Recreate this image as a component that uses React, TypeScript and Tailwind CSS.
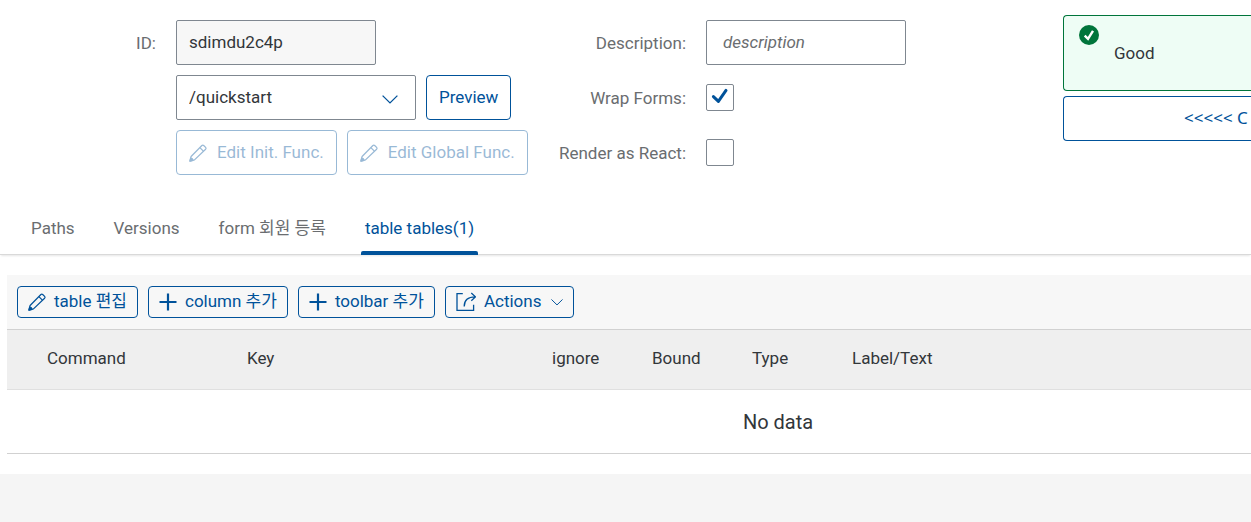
import { useState, type ReactNode } from "react";
import { clsx } from "clsx";

const PencilIcon = () => (
  <svg viewBox="0 0 18 18" className="size-[18px] shrink-0" fill="none" stroke="currentColor" strokeWidth="1.2" strokeLinejoin="round" aria-hidden="true">
    <path d="M0.9 17.1 L2.1 12.5 L12.9 1.5 Q13.8 0.6 14.7 1.5 L16.6 3.4 Q17.4 4.3 16.6 5.2 L5.5 15.9 Z" />
    <path d="M10.9 3.6 L14.4 7.2" />
    <path d="M0.9 17.1 L1.7 14 Q3.8 14.2 4 16.3 Z" fill="currentColor" />
  </svg>
);

const PlusIcon = () => (
  <svg viewBox="0 0 18 18" className="size-[18px] shrink-0" fill="none" stroke="currentColor" strokeWidth="2.2" aria-hidden="true">
    <path d="M0.5 9 H17.5 M9 0.5 V17.5" />
  </svg>
);

const ShareIcon = () => (
  <svg viewBox="0 0 20 20" className="size-5 shrink-0" fill="none" stroke="currentColor" strokeWidth="1.3" aria-hidden="true">
    <path d="M6.8 1.7 H1 V18.3 H17.6 V12.8" />
    <path d="M8.2 14.4 C8.2 8.6 11.4 4.9 19.2 4.9 M15.3 1 L19.4 4.9 L15.3 8.8" />
  </svg>
);

const ChevronIcon = ({ className }: { className: string }) => (
  <svg viewBox="0 0 16 9" className={className} fill="none" stroke="currentColor" strokeWidth="1.3" aria-hidden="true">
    <path d="M0.6 0.6 L8 7.9 L15.4 0.6" />
  </svg>
);

const SuccessIcon = () => (
  <svg viewBox="0 0 20 20" className="size-5 shrink-0" aria-hidden="true">
    <circle cx="10" cy="10" r="10" fill="#00753b" />
    <path d="M5.7 10.6 L9 13.8 L14 5.8" fill="none" stroke="#fff" strokeWidth="2.4" />
  </svg>
);

const fieldLabel = "pt-px text-right leading-6 text-[#6a6d70]";
const buttonBase = "flex items-center rounded border border-[#00529a] text-[#00529a]";

function FormButton({ children, disabled }: { children: ReactNode; disabled?: boolean }) {
  return (
    <button type="button" disabled={disabled} className={clsx(buttonBase, "h-[45px] gap-[10px] bg-white px-3 whitespace-nowrap disabled:opacity-40")}>
      {children}
    </button>
  );
}

function ToolbarButton({ icon, children }: { icon: ReactNode; children: ReactNode }) {
  return (
    <button type="button" className={clsx(buttonBase, "h-8 gap-2 bg-[#f7f7f7] px-[10px] whitespace-nowrap")}>
      {icon}
      {children}
    </button>
  );
}

function CheckField({ id, initial }: { id: string; initial: boolean }) {
  const [checked, setChecked] = useState(initial);
  return (
    <div className="grid justify-self-start">
      <input
        id={id}
        type="checkbox"
        checked={checked}
        onChange={() => setChecked(!checked)}
        className="col-start-1 row-start-1 h-[27px] w-7 appearance-none rounded-xs border border-[#7f8790] bg-white"
      />
      {checked && (
        <svg viewBox="0 0 28 27" className="pointer-events-none col-start-1 row-start-1 h-[27px] w-7" fill="none" stroke="#00529a" strokeWidth="3" strokeLinecap="round" strokeLinejoin="round" aria-hidden="true">
          <path d="M7.4 12.6 L12.4 17.4 L20 6.4" />
        </svg>
      )}
    </div>
  );
}

const tabs = ["Paths", "Versions", "form 회원 등록", "table tables(1)"];

const columns = [
  { title: "Command", width: "w-[200px]" },
  { title: "Key", width: "w-[305px]" },
  { title: "ignore", width: "w-[100px]" },
  { title: "Bound", width: "w-[100px]" },
  { title: "Type", width: "w-[100px]" },
  { title: "Label/Text", width: "" },
];

export default function App() {
  const [active, setActive] = useState(3);
  return (
    <div className="min-h-screen overflow-x-hidden bg-[#f5f5f5] font-['Roboto','Noto_Sans_CJK_KR',sans-serif] text-[17px] text-[#32363a]">
      <main className="bg-white pb-5">
        <div className="flex">
          <form className="grid shrink-0 grid-cols-[156px_356px_134px_337px] items-center gap-x-5 gap-y-[10px] pt-5">
            <label htmlFor="id" className={fieldLabel}>ID:</label>
            <input id="id" readOnly value="sdimdu2c4p" className="h-[45px] w-[200px] rounded-xs border border-[#7f8790] bg-[#f7f7f7] px-3 pb-0.5" />
            <label htmlFor="description" className={fieldLabel}>Description:</label>
            <input id="description" placeholder="description" className="h-[45px] w-[200px] rounded-xs border border-[#7f8790] px-4 pb-0.5 placeholder:text-[#6a6d70] placeholder:italic" />

            <div className="col-start-2 flex gap-[10px]">
              <div className="grid w-[240px] items-center">
                <select aria-label="Path" className="col-start-1 row-start-1 h-[45px] appearance-none rounded-xs border border-[#7f8790] bg-white px-3">
                  <option>/quickstart</option>
                </select>
                <ChevronIcon className="pointer-events-none col-start-1 row-start-1 mt-1 mr-[18px] w-4 justify-self-end text-[#00529a]" />
              </div>
              <FormButton>Preview</FormButton>
            </div>
            <label htmlFor="wrap" className={fieldLabel}>Wrap Forms:</label>
            <CheckField id="wrap" initial />

            <div className="col-start-2 flex gap-[10px]">
              <FormButton disabled><PencilIcon />Edit Init. Func.</FormButton>
              <FormButton disabled><PencilIcon />Edit Global Func.</FormButton>
            </div>
            <label htmlFor="react" className={fieldLabel}>Render as React:</label>
            <CheckField id="react" initial={false} />
          </form>
          <aside className="ml-5 flex min-w-0 flex-1 flex-col gap-[5px] pt-[15px]">
            <div role="status" className="flex h-[76px] gap-[15px] rounded-l border border-r-0 border-[#00753b] bg-[#eefdf5] pl-[15px]">
              <div className="pt-[9px]"><SuccessIcon /></div>
              <p className="self-center leading-6">Good</p>
            </div>
            <button type="button" className="h-[45px] overflow-hidden rounded-l border border-r-0 border-[#00529a] bg-white pb-0.5 pl-[120px] text-left font-['Noto_Sans',sans-serif] whitespace-nowrap text-[#00529a]">
              &lt;&lt;&lt;&lt;&lt; C
            </button>
          </aside>
        </div>

        <div role="tablist" className="mt-[25px] flex h-[55px] gap-[31px] border-b border-[#d9d9d9] px-[27px] shadow-[0_2px_2px_-1px_rgba(0,0,0,0.1)]">
          {tabs.map((tab, i) => (
            <button
              key={tab}
              type="button"
              role="tab"
              aria-selected={i === active}
              onClick={() => setActive(i)}
              className={clsx("-mb-px flex flex-col justify-between px-1 pt-4", i === active ? "text-[#00529a]" : "text-[#6a6d70]")}
            >
              <span className="leading-6">{tab}</span>
              <span className={clsx("-mx-1 h-1 self-stretch rounded-t-xs", i === active && "bg-[#00529a]")} />
            </button>
          ))}
        </div>

        <section className="mt-5 ml-[7px]">
          <div role="toolbar" className="flex h-[55px] items-center gap-[10px] border-b border-[#d1d1d1] bg-[#f7f7f7] px-[10px]">
            <ToolbarButton icon={<PencilIcon />}>table 편집</ToolbarButton>
            <ToolbarButton icon={<PlusIcon />}>column 추가</ToolbarButton>
            <ToolbarButton icon={<PlusIcon />}>toolbar 추가</ToolbarButton>
            <ToolbarButton icon={<ShareIcon />}>
              Actions
              <ChevronIcon className="ml-0.5 w-3" />
            </ToolbarButton>
          </div>
          <table className="w-full min-w-[1542px] table-fixed">
            <thead>
              <tr className="h-[59px] border-b border-[#e0e0e0] bg-[#efefef]">
                <th className="w-8" aria-label="Selection" />
                {columns.map((c) => (
                  <th key={c.title} className={clsx("px-2 pb-0.5 text-left font-normal", c.width)}>{c.title}</th>
                ))}
              </tr>
            </thead>
            <tbody>
              <tr className="h-16 border-b border-[#d1d1d1]">
                <td colSpan={7} className="pt-0.5 text-center text-[20px]">No data</td>
              </tr>
            </tbody>
          </table>
        </section>
      </main>
    </div>
  );
}
